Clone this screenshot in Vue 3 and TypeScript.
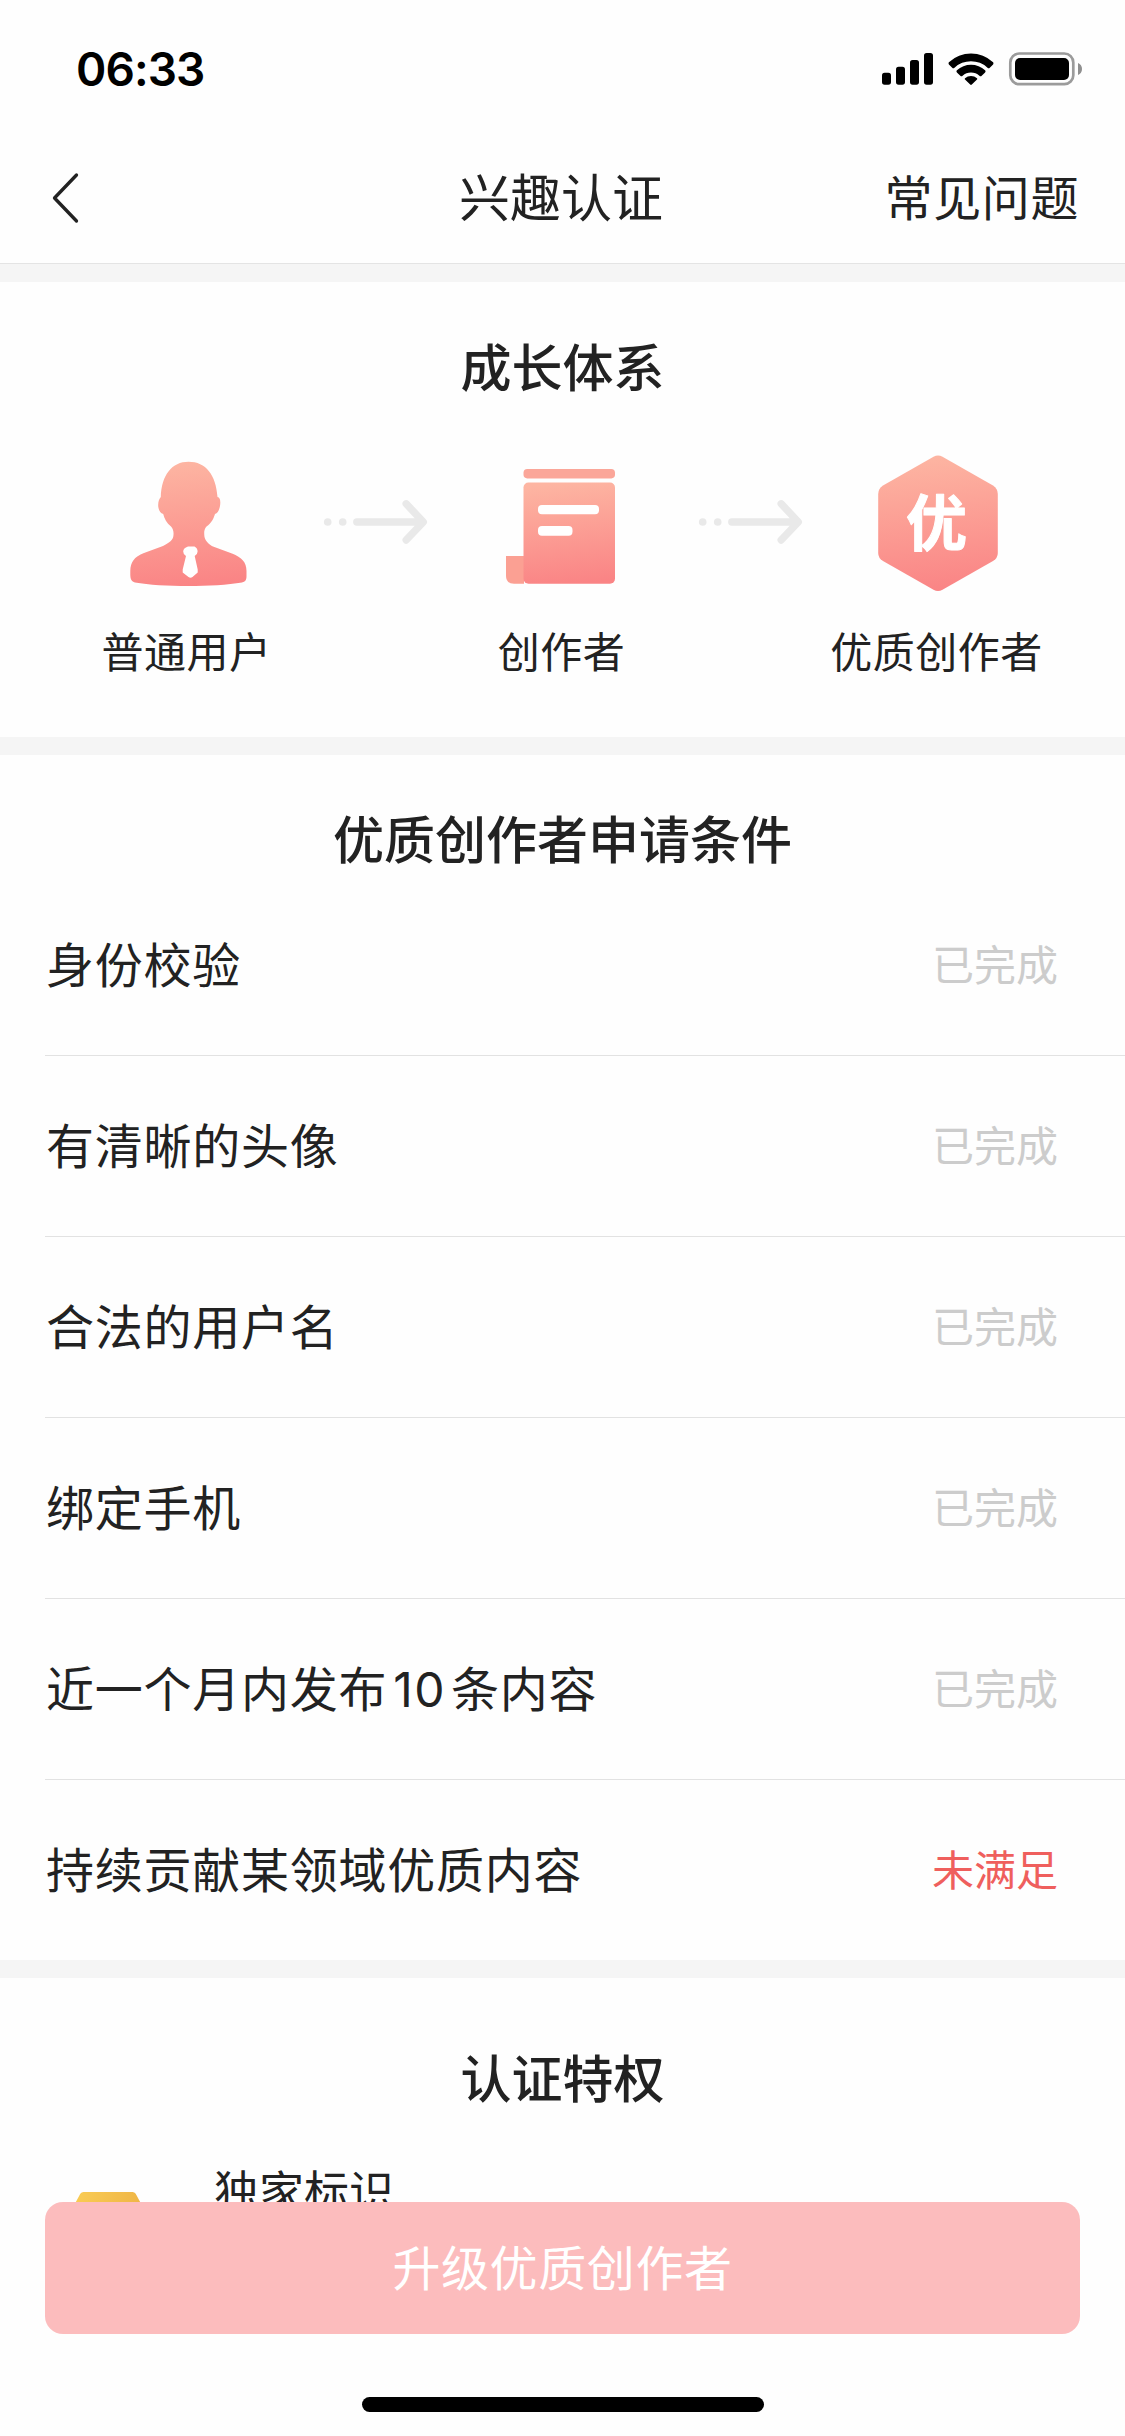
<script setup lang="ts">
interface Condition {
  parts: string[]
  done: boolean
}

const conditions: Condition[] = [
  { parts: ['身份校验'], done: true },
  { parts: ['有清晰的头像'], done: true },
  { parts: ['合法的用户名'], done: true },
  { parts: ['绑定手机'], done: true },
  { parts: ['近一个月内发布', '10', '条内容'], done: true },
  { parts: ['持续贡献某领域优质内容'], done: false },
]
</script>

<template>
  <div class="page">
    <header class="status-bar">
      <span class="time">06:33</span>
      <svg class="status-icons" width="204" height="40" viewBox="0 0 204 40">
        <rect x="2" y="22.7" width="9" height="12" rx="2.6" />
        <rect x="16" y="16.7" width="9" height="18" rx="2.6" />
        <rect x="30" y="10" width="9" height="24.7" rx="2.6" />
        <rect x="44" y="3" width="9" height="31.7" rx="2.6" />
        <path d="M68.9 12.2a2 2 0 0 0 0 2.2l3.3 3.3a1.7 1.7 0 0 0 2.3 0a24 24 0 0 1 33 0a1.7 1.7 0 0 0 2.3 0l3.3-3.3a2 2 0 0 0 0-2.2a32.5 32.5 0 0 0-44.2 0z" />
        <path d="M76.9 20.3a1.6 1.6 0 0 0 0 2.2l3.4 3.3a1.7 1.7 0 0 0 2.3 0a12.5 12.5 0 0 1 16.8 0a1.7 1.7 0 0 0 2.3 0l3.4-3.3a1.6 1.6 0 0 0 0-2.2a20.5 20.5 0 0 0-28.2 0z" />
        <path d="M85 28.2a.9 .9 0 0 0 0 1.3l5.2 5a1.1 1.1 0 0 0 1.6 0l5.2-5a.9 .9 0 0 0 0-1.3a9 9 0 0 0-12 0z" />
        <rect x="130.3" y="3.500" width="63" height="30.700" rx="9" fill="none" stroke="#9b9b9b" stroke-width="2.7" />
        <rect x="135" y="8" width="54" height="22" rx="5" />
        <path d="M198 13c2.500 1 4 3.200 4 6s-1.500 5-4 6z" fill="#8f8f8f" />
      </svg>
    </header>

    <nav class="nav">
      <svg class="back" width="30" height="54" viewBox="0 0 30 54">
        <path d="M27.5 4L5.500 27L27.500 50" fill="none" stroke="#222" stroke-width="3.300" stroke-linecap="round" stroke-linejoin="round" />
      </svg>
      <h1 class="nav-title">兴趣认证</h1>
      <span class="faq">常见问题</span>
    </nav>

    <section class="growth">
      <h2>成长体系</h2>
      <div class="steps">
        <div class="step">
          <svg width="150" height="150" viewBox="0 0 150 150">
            <defs>
              <linearGradient id="coral" x1="0.450" y1="0" x2="0.550" y2="1">
                <stop offset="0" stop-color="#fdb5a2" />
                <stop offset="1" stop-color="#fa8485" />
              </linearGradient>
            </defs>
            <path
              fill="url(#coral)"
              d="M75.500 10.700C93 10.700 103 24 104.500 46C107.500 46.500 107.800 51 106.800 56C105.800 60 104.500 62.500 102 63C100.500 68 98.500 72 93.500 75.500C90.800 78.500 91 82 91.500 86C92.500 90 96 93.500 100 95.500L119 102.500C129 106.500 133.300 111 133.500 120V125C133.500 129 132.500 130.500 129 131.500C101 136.200 49 136.200 22 131.500C18.500 130.500 17.500 128.500 17.300 124V120C17.500 111 21 106 31 102L50 95C55 92.500 59 90 60.200 86C61 82 60.500 78 58 75.500C53.500 72 51.500 68 50.200 63C47.500 62.500 46 60 45.300 56C44.800 51.500 46 48 47.800 46C48.500 24 59 10.700 75.500 10.700Z"
            />
            <path fill="#fff" d="M75 95.500H81.500Q84.600 97 84.600 100.500Q84.600 103.500 81.700 105L84.700 118.500V121.500L79.500 126Q77.500 127.500 75.500 126L69.700 121.500V118.500L73 105Q70.200 103.500 70.200 100.500Q70.200 97 75 95.500Z" />
          </svg>
          <span>普通用户</span>
        </div>
        <svg class="arrow" width="110" height="50" viewBox="0 0 110 50">
          <circle cx="7.700" cy="25" r="3.800" />
          <circle cx="22.700" cy="25" r="3.800" />
          <path d="M36.800 25H102M86.200 6.800L103.300 25L86.200 43" />
        </svg>
        <div class="step">
          <svg width="150" height="150" viewBox="0 0 150 150">
            <rect x="35.500" y="18" width="91.500" height="9.400" rx="3.800" fill="#fba699" />
            <path d="M18 105H36V132.700H26Q18 132.700 18 125Z" fill="#fba093" />
            <rect x="35.500" y="31.500" width="91.500" height="101.200" rx="5" fill="url(#coral)" />
            <rect x="50" y="54" width="61" height="9.300" rx="4" fill="#fff" />
            <rect x="50" y="75" width="34.500" height="9.700" rx="4" fill="#fff" />
          </svg>
          <span>创作者</span>
        </div>
        <svg class="arrow" width="110" height="50" viewBox="0 0 110 50">
          <circle cx="7.700" cy="25" r="3.800" />
          <circle cx="22.700" cy="25" r="3.800" />
          <path d="M36.800 25H102M86.200 6.800L103.300 25L86.200 43" />
        </svg>
        <div class="step">
          <svg width="150" height="150" viewBox="0 0 150 150">
            <path
              fill="url(#coral)"
              d="M70.500 5.800Q75 3.300 79.500 5.800L130 34.500Q134.800 37.500 134.800 43V102Q134.800 107 130 110L79.500 138.800Q75 141.300 70.500 138.800L20 110Q15.200 107 15.200 102V43Q15.200 37.500 20 34.500Z"
            />
            <text class="badge-text" x="73.500" y="94.500" text-anchor="middle">优</text>
          </svg>
          <span>优质创作者</span>
        </div>
      </div>
    </section>

    <section class="conditions">
      <h2>优质创作者申请条件</h2>
      <ul>
        <li v-for="item in conditions" :key="item.parts[0]">
          <span class="name">
            <span v-for="part in item.parts" :key="part" :class="{ digits: part === '10' }">{{ part }}</span>
          </span>
          <span class="state" :class="{ unmet: !item.done }">{{ item.done ? '已完成' : '未满足' }}</span>
        </li>
      </ul>
    </section>

    <section class="privileges">
      <h2>认证特权</h2>
      <div class="privilege">
        <svg width="90" height="80" viewBox="0 0 90 80">
          <defs>
            <linearGradient id="gold" x1="0" y1="0" x2="1" y2="0.300">
              <stop offset="0" stop-color="#fbd056" />
              <stop offset="1" stop-color="#edb043" />
            </linearGradient>
          </defs>
          <path fill="url(#gold)" d="M20.500 0H69.500Q71.500 0 72.700 1.800L89 32Q90.500 35 89 38L69 74Q66 78 61 78H30Q25 78 23 74L1 38Q-0.500 35 1 32L17.300 1.800Q18.500 0 20.500 0Z" />
        </svg>
        <span>独家标识</span>
      </div>
    </section>

    <button class="upgrade" type="button">升级优质创作者</button>
    <div class="home-indicator"></div>
  </div>
</template>

<style>
body {
  margin: 0;
  background: #fff;
}
</style>

<style scoped>
.page {
  position: relative;
  box-sizing: border-box;
  width: 1125px;
  height: 2436px;
  overflow: hidden;
  background: #fefefe;
  color: #222;
  font-family: "Noto Sans CJK SC", sans-serif;
}

.status-bar {
  box-sizing: border-box;
  height: 132px;
  padding: 50px 41px 0 76px;
  display: flex;
  justify-content: space-between;
  align-items: flex-start;
}

.time {
  font: 600 46px/38px Inter, sans-serif;
  letter-spacing: -0.9px;
  color: #000;
}

.nav {
  box-sizing: border-box;
  height: 132px;
  padding: 0 46px 6px 49px;
  display: grid;
  grid-template-columns: 220px 1fr 220px;
  align-items: center;
  border-bottom: 1px solid #e4e4e4;
}

.nav-title {
  margin: 0 3px 0 -3px;
  font-size: 51px;
  font-weight: 400;
  line-height: 72px;
  text-align: center;
}

.back {
  margin-top: 6px;
}

.faq {
  font-size: 48px;
  line-height: 72px;
  letter-spacing: 0.6px;
  text-align: right;
}

h2 {
  margin: 0;
  font-size: 51px;
  font-weight: 500;
  line-height: 72px;
  text-align: center;
}

.growth {
  box-sizing: border-box;
  height: 491px;
  padding-top: 47px;
  border-top: 18px solid #f5f5f5;
  border-bottom: 18px solid #f5f5f5;
}

.steps {
  display: flex;
  justify-content: center;
  align-items: flex-start;
  padding-top: 50px;
}

.step {
  width: 265px;
  display: flex;
  flex-direction: column;
  align-items: center;
}

.step span {
  margin: 19px 2px 0 0;
  font-size: 42px;
  line-height: 60px;
  letter-spacing: 0.5px;
  white-space: nowrap;
}

.arrow {
  width: 110px;
  flex: none;
  margin-top: 46px;
  fill: #e9e9e9;
}

.arrow path {
  fill: none;
  stroke: #e9e9e9;
  stroke-width: 7.4px;
  stroke-linecap: round;
  stroke-linejoin: round;
}

.badge-text {
  font-size: 61px;
  font-weight: 700;
  fill: #fff;
  stroke: #fff;
  stroke-width: 1px;
  stroke-linejoin: round;
}

.conditions {
  padding-top: 46px;
  border-bottom: 18px solid #f5f5f5;
}

.conditions h2 {
  height: 74px;
}

ul {
  margin: 0;
  padding: 0 0 0 45px;
  list-style: none;
}

li {
  box-sizing: border-box;
  height: 181px;
  padding: 0 67px 6px 1px;
  display: flex;
  justify-content: space-between;
  align-items: center;
  border-bottom: 1px solid #e2e2e2;
}

li:last-child {
  height: 180px;
  border-bottom: none;
}

.name {
  display: flex;
  align-items: baseline;
  font-size: 48px;
  line-height: 72px;
  letter-spacing: 0.75px;
}

.digits {
  padding: 0 5px 0 6px;
  font-family: Inter, sans-serif;
  font-size: 48px;
  line-height: 60px;
  letter-spacing: 1.5px;
}

.state {
  margin-top: 2px;
  font-size: 42px;
  line-height: 60px;
  color: #ccc;
}

.state.unmet {
  color: #ef5f5d;
}

.privileges {
  padding-top: 62px;
}

.privilege {
  display: flex;
  align-items: flex-start;
  gap: 61px;
  padding: 45px 0 0 63px;
  font-size: 45px;
  line-height: 66px;
}

.privilege svg {
  margin-top: 35px;
}

.upgrade {
  position: absolute;
  left: 45px;
  top: 2202px;
  width: 1035px;
  height: 132px;
  padding: 0 0 7px;
  border: 0;
  border-radius: 18px;
  background: #fcbcbd;
  color: #fff;
  font: 400 48px/72px "Noto Sans CJK SC", sans-serif;
  letter-spacing: 0.6px;
}

.home-indicator {
  position: absolute;
  left: 362px;
  top: 2397px;
  width: 402px;
  height: 15px;
  border-radius: 8px;
  background: #000;
}
</style>
